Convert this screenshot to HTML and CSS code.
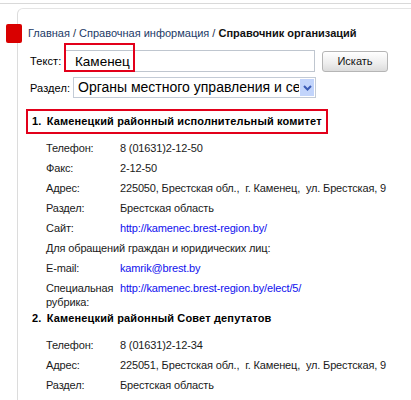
FILE: index.html
```html
<!DOCTYPE html>
<html lang="ru">
<head>
<meta charset="utf-8">
<title>Справочник организаций</title>
<link rel="stylesheet" href="styles.css">
</head>
<body>
<div class="topline"></div>
<div class="page">
  <div class="marker"></div>
  <div class="card">
    <div class="crumbs"><a href="#">Главная</a> / <a href="#">Справочная информация</a> / <b>Справочник организаций</b></div>
    <form class="search">
      <div class="row">
        <label class="lbl">Текст:</label>
        <span class="field">
          <input class="txt" type="text" value="Каменец">
          <span class="hl"></span>
        </span>
        <button type="button" class="btn">Искать</button>
      </div>
      <div class="row">
        <label class="lbl">Раздел:</label>
        <span class="sel">
          <span class="sel-text">Органы местного управления и сельсоветы</span>
          <span class="sel-arrow"><svg width="9" height="6" viewBox="0 0 9 6"><path d="M1 1 L4.5 4.5 L8 1" fill="none" stroke="#3a5bb5" stroke-width="2"/></svg></span>
        </span>
      </div>
    </form>

    <div class="org">
      <h2 class="org-title boxed"><span class="num">1.</span> Каменецкий районный исполнительный комитет</h2>
      <div class="info">
        <div class="k">Телефон:</div><div class="v">8 (01631)2-12-50</div>
        <div class="k">Факс:</div><div class="v">2-12-50</div>
        <div class="k">Адрес:</div><div class="v nowrap">225050, Брестская обл., &nbsp;г. Каменец, &nbsp;ул. Брестская, 9</div>
        <div class="k">Раздел:</div><div class="v">Брестская область</div>
        <div class="k">Сайт:</div><div class="v"><a href="#">http://kamenec.brest-region.by/</a></div>
        <div class="full">Для обращений граждан и юридических лиц:</div>
        <div class="k">E-mail:</div><div class="v"><a href="#">kamrik@brest.by</a></div>
        <div class="k">Специальная рубрика:</div><div class="v"><a href="#">http://kamenec.brest-region.by/elect/5/</a></div>
      </div>
    </div>

    <div class="org second">
      <h2 class="org-title"><span class="num">2.</span> Каменецкий районный Совет депутатов</h2>
      <div class="info">
        <div class="k">Телефон:</div><div class="v">8 (01631)2-12-34</div>
        <div class="k">Адрес:</div><div class="v nowrap">225051, Брестская обл., &nbsp;г. Каменец, &nbsp;ул. Брестская, 9</div>
        <div class="k">Раздел:</div><div class="v">Брестская область</div>
      </div>
    </div>
  </div>
</div>
</body>
</html>
```

FILE: styles.css
```css
html, body {
  margin: 0;
  padding: 0;
  background: #fff;
}
body {
  font-family: "Liberation Sans", Arial, sans-serif;
  font-size: 11px;
  color: #000;
  width: 411px;
  height: 400px;
  overflow: hidden;
}
.topline {
  height: 1px;
  margin-top: 3px;
  background: #d9d9d9;
}
.page {
  position: relative;
  padding-top: 4px;
}
.marker {
  position: absolute;
  left: 6px;
  top: 20px;
  width: 16px;
  height: 19px;
  background: #d90000;
  border-radius: 2px;
}
.card {
  margin-left: 17px;
  border-left: 1px solid #dcdcdc;
  border-top: 1px solid #e4e4e4;
  border-top-left-radius: 6px;
  padding: 17px 0 0 10px;
  height: 400px;
}
.crumbs {
  font-size: 11px;
  line-height: 14px;
  color: #1c2f4f;
  white-space: nowrap;
}
.crumbs a {
  color: #1c3a66;
  text-decoration: none;
}
.crumbs b {
  color: #111;
}
.search {
  margin: 10px 0 0 2px;
}
.row {
  display: flex;
  align-items: center;
}
.row + .row {
  margin-top: 5px;
}
.lbl {
  font-size: 11px;
  letter-spacing: 0.1px;
  width: 35px;
  white-space: nowrap;
}
.row + .row .lbl {
  width: 43px;
}
.field {
  position: relative;
  display: block;
}
.txt {
  box-sizing: border-box;
  width: 250px;
  height: 22px;
  margin: 0;
  border: 1px solid #bfc6cf;
  padding: 0 0 0 9px;
  font-family: "Liberation Sans", Arial, sans-serif;
  font-size: 13.5px;
  color: #000;
  outline: none;
}
.hl {
  position: absolute;
  left: -1px;
  top: -7px;
  width: 67px;
  height: 25px;
  border: 2px solid #e2001a;
}
.btn {
  margin-left: 7px;
  width: 66px;
  height: 21px;
  border: 1px solid #b5b5b5;
  border-radius: 3px;
  background: linear-gradient(#ffffff, #ededed 60%, #dcdcdc);
  font-family: "Liberation Sans", Arial, sans-serif;
  font-size: 11px;
  color: #111;
  padding: 0;
}
.sel {
  box-sizing: border-box;
  display: flex;
  width: 243px;
  height: 21px;
  border: 1px solid #c3cbd6;
  overflow: hidden;
}
.sel-text {
  flex: 1;
  overflow: hidden;
  white-space: nowrap;
  font-family: "Liberation Sans", Arial, sans-serif;
  font-size: 14px;
  line-height: 19px;
  padding-left: 4px;
}
.sel-arrow {
  width: 14px;
  margin: 1px;
  background: #c2d4fb;
  display: flex;
  align-items: center;
  justify-content: center;
}
.org {
  margin-top: 11px;
}
.org.second {
  margin-top: -3px;
}
.org-title {
  display: inline-block;
  margin: 0 0 0 -2px;
  padding: 3px 4px 4px 4px;
  font-size: 11px;
  font-weight: bold;
  letter-spacing: 0.15px;
  line-height: 14px;
  border: 2px solid transparent;
  white-space: nowrap;
}
.org-title.boxed {
  border-color: #e2001a;
}
.num {
  margin-right: 2px;
}
.info {
  display: grid;
  grid-template-columns: 74px 1fr;
  row-gap: 6px;
  margin: 7px 0 0 18px;
  font-size: 11px;
  letter-spacing: -0.15px;
  line-height: 14px;
  color: #1a1a1a;
}
.second .info {
  margin-top: 7px;
}
.k, .v {
  min-width: 0;
}
.full {
  grid-column: 1 / 3;
}
.nowrap {
  white-space: nowrap;
}
.info a {
  color: #1010ee;
  text-decoration: none;
}
```
